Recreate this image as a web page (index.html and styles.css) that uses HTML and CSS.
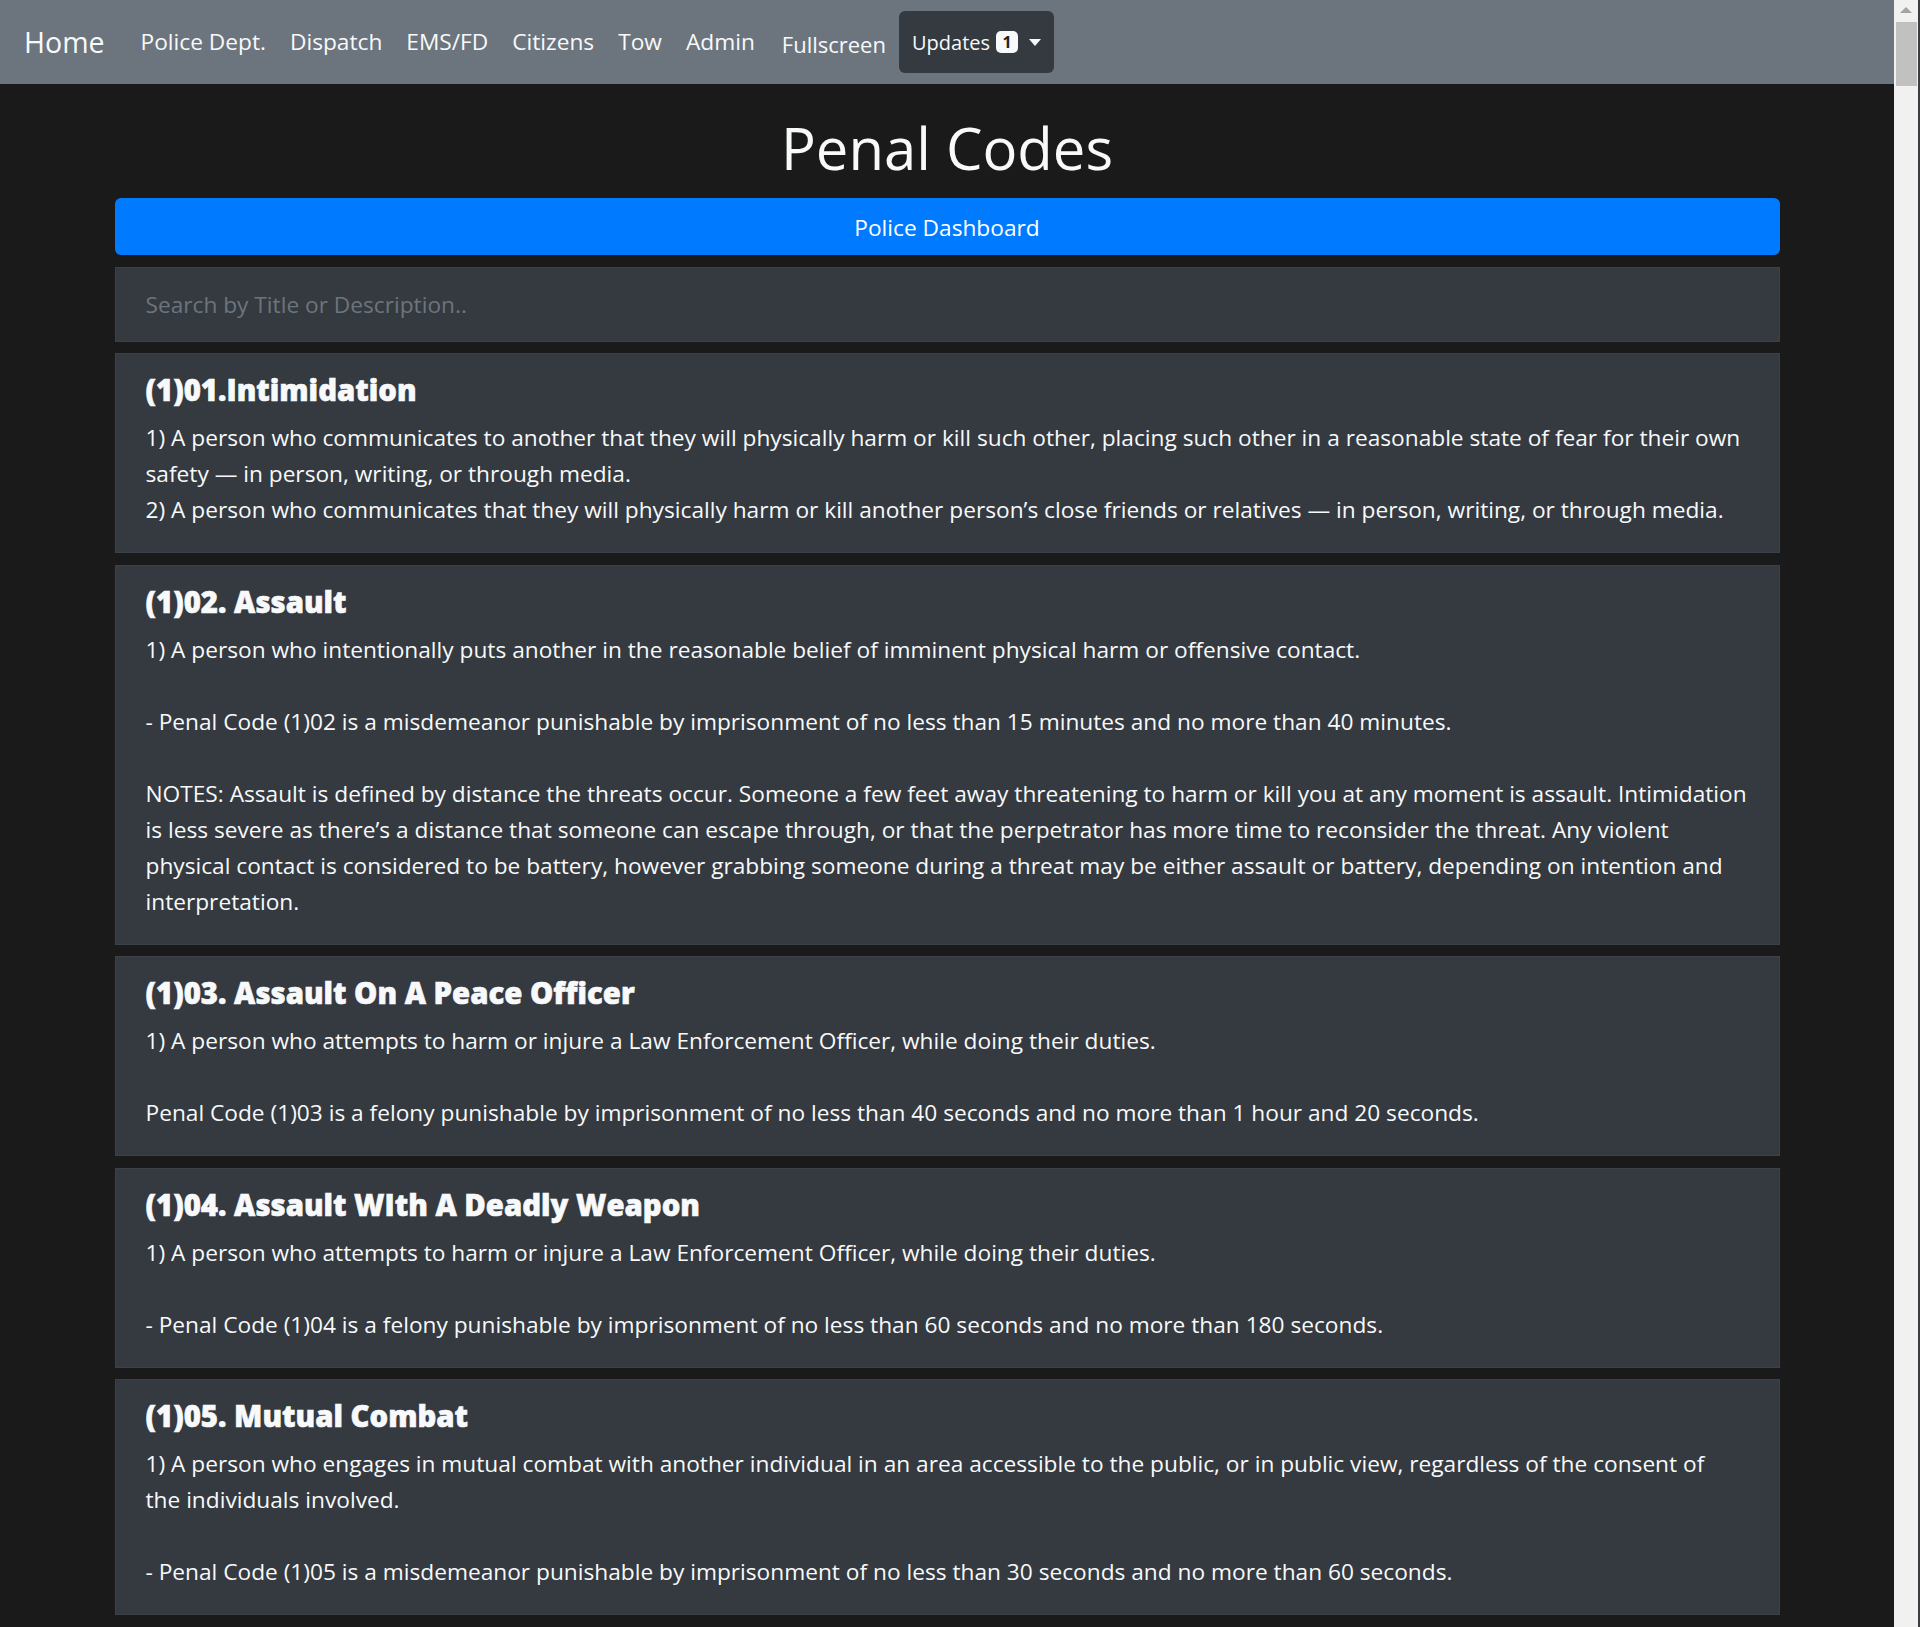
FILE: index.html
```html
<!DOCTYPE html>
<html lang="en">
<head>
<meta charset="utf-8">
<title>Penal Codes</title>
<link rel="stylesheet" href="styles.css">
</head>
<body>
<div class="window">
  <div class="viewport">
    <nav class="navbar">
      <a class="brand" href="#">Home</a>
      <ul class="nav">
        <li><a class="nav-link" href="#">Police Dept.</a></li>
        <li><a class="nav-link" href="#">Dispatch</a></li>
        <li><a class="nav-link" href="#">EMS/FD</a></li>
        <li><a class="nav-link" href="#">Citizens</a></li>
        <li><a class="nav-link" href="#">Tow</a></li>
        <li><a class="nav-link" href="#">Admin</a></li>
      </ul>
      <button class="fullscreen-btn" type="button">Fullscreen</button>
      <button class="updates-btn" type="button">Updates <span class="badge">1</span><span class="caret"></span></button>
    </nav>

    <main class="container">
      <h1 class="page-title">Penal Codes</h1>
      <a class="btn-primary" href="#">Police Dashboard</a>
      <input class="search" type="text" placeholder="Search by Title or Description..">

      <section class="code-card">
        <h5 class="code-title">(1)01.Intimidation</h5>
        <p class="code-text">1) A person who communicates to another that they will physically harm or kill such other, placing such other in a reasonable state of fear for their own safety — in person, writing, or through media.<br>2) A person who communicates that they will physically harm or kill another person’s close friends or relatives — in person, writing, or through media.</p>
      </section>

      <section class="code-card">
        <h5 class="code-title">(1)02. Assault</h5>
        <p class="code-text">1) A person who intentionally puts another in the reasonable belief of imminent physical harm or offensive contact.<br><br>- Penal Code (1)02 is a misdemeanor punishable by imprisonment of no less than 15 minutes and no more than 40 minutes.<br><br>NOTES: Assault is defined by distance the threats occur. Someone a few feet away threatening to harm or kill you at any moment is assault. Intimidation is less severe as there’s a distance that someone can escape through, or that the perpetrator has more time to reconsider the threat. Any violent physical contact is considered to be battery, however grabbing someone during a threat may be either assault or battery, depending on intention and interpretation.</p>
      </section>

      <section class="code-card">
        <h5 class="code-title">(1)03. Assault On A Peace Officer</h5>
        <p class="code-text">1) A person who attempts to harm or injure a Law Enforcement Officer, while doing their duties.<br><br>Penal Code (1)03 is a felony punishable by imprisonment of no less than 40 seconds and no more than 1 hour and 20 seconds.</p>
      </section>

      <section class="code-card">
        <h5 class="code-title">(1)04. Assault WIth A Deadly Weapon</h5>
        <p class="code-text">1) A person who attempts to harm or injure a Law Enforcement Officer, while doing their duties.<br><br>- Penal Code (1)04 is a felony punishable by imprisonment of no less than 60 seconds and no more than 180 seconds.</p>
      </section>

      <section class="code-card">
        <h5 class="code-title">(1)05. Mutual Combat</h5>
        <p class="code-text">1) A person who engages in mutual combat with another individual in an area accessible to the public, or in public view, regardless of the consent of <span class="nowrap">the individuals</span> involved.<br><br>- Penal Code (1)05 is a misdemeanor punishable by imprisonment of no less than 30 seconds and no more than 60 seconds.</p>
      </section>

      <div class="code-card code-card-peek"></div>
    </main>
  </div>
  <div class="scrollbar">
    <div class="scroll-arrow"></div>
    <div class="scroll-thumb"></div>
  </div>
</div>
</body>
</html>
```

FILE: styles.css
```css
html, body {
  margin: 0;
  padding: 0;
  height: 1627px;
  overflow: hidden;
  background: #1a1a1a;
}

body {
  font-family: "Open Sans", "Noto Sans", sans-serif;
  color: #f8f9fa;
}

.window {
  display: flex;
  height: 1627px;
}

.viewport {
  flex: 1;
  min-width: 0;
  overflow: hidden;
  background: #1a1a1a;
}

/* ---------- navbar ---------- */
.navbar {
  display: flex;
  align-items: center;
  height: 84px;
  box-sizing: border-box;
  padding: 12px 24px;
  background: #6c757d;
}

.brand {
  font-size: 28.5px;
  line-height: 45px;
  color: #f8f9fa;
  text-decoration: none;
  margin-right: 24px;
  margin-top: 1px;
}

.nav {
  display: flex;
  list-style: none;
  margin: 0;
  padding: 0;
}

.nav-link {
  display: block;
  padding: 0 12px;
  font-size: 22.7px;
  line-height: 36px;
  color: #f8f9fa;
  text-decoration: none;
}

.fullscreen-btn {
  font-family: inherit;
  font-size: 22px;
  line-height: 36px;
  color: #f8f9fa;
  background: transparent;
  border: 0;
  padding: 3px 12px 0;
  margin-left: 3px;
}

.updates-btn {
  display: flex;
  align-items: center;
  height: 62px;
  margin-left: 1px;
  padding: 0 13px 0 13px;
  font-family: inherit;
  font-size: 20px;
  color: #f8f9fa;
  background: #343a40;
  border: 0;
  border-radius: 6px;
}

.badge {
  display: inline-flex;
  align-items: center;
  justify-content: center;
  width: 22px;
  height: 22px;
  margin-left: 6px;
  border-radius: 5px;
  background: #f8f9fa;
  color: #212529;
  font-size: 16px;
  font-weight: 700;
}

.caret {
  display: inline-block;
  margin-left: 11px;
  width: 0;
  height: 0;
  border-top: 7px solid #f8f9fa;
  border-left: 6.5px solid transparent;
  border-right: 6.5px solid transparent;
}

/* ---------- main ---------- */
.container {
  width: 1665px;
  margin: 0 auto;
}

.page-title {
  margin: 29px 0 15px;
  font-size: 58px;
  line-height: 70px;
  font-weight: 500;
  text-align: center;
  color: #f8f9fa;
}

.btn-primary {
  display: block;
  height: 57px;
  box-sizing: border-box;
  margin-bottom: 12px;
  padding: 12px 0 9px;
  border-radius: 6px;
  background: #007bff;
  color: #fff;
  text-align: center;
  text-decoration: none;
  font-size: 22.7px;
  line-height: 36px;
}

.search {
  display: block;
  width: 100%;
  height: 75px;
  box-sizing: border-box;
  margin: 0 0 11px;
  padding: 0 30px;
  font-family: inherit;
  font-size: 22.7px;
  color: #f8f9fa;
  background: #343a40;
  border: 1px solid #3b4148;
  outline: none;
}

.search::placeholder {
  color: #6c757d;
}

.code-card {
  margin-bottom: 11.5px;
  padding: 18px 30px 24px;
  background: #343a40;
  border: 1px solid #3b4148;
}

.code-card-peek {
  height: 200px;
  box-sizing: border-box;
}

.code-title {
  margin: 0 0 12px;
  font-size: 29.3px;
  line-height: 36px;
  font-weight: 800;
  -webkit-text-stroke: 0.6px #f8f9fa;
  color: #f8f9fa;
}

.code-text {
  margin: 0;
  font-size: 22.7px;
  line-height: 36px;
  color: #f8f9fa;
}

.nowrap {
  white-space: nowrap;
}

/* ---------- fake window scrollbar ---------- */
.scrollbar {
  width: 24px;
  height: 1627px;
  background: #f1f1f1;
  border-right: 2px solid #3a3d42;
  display: flex;
  flex-direction: column;
  align-items: center;
  padding-top: 7px;
  box-sizing: content-box;
}

.scroll-arrow {
  width: 0;
  height: 0;
  border-bottom: 6px solid #a3a3a3;
  border-left: 6px solid transparent;
  border-right: 6px solid transparent;
}

.scroll-thumb {
  width: 21px;
  height: 64px;
  margin-top: 9px;
  background: #c1c1c1;
}
```
